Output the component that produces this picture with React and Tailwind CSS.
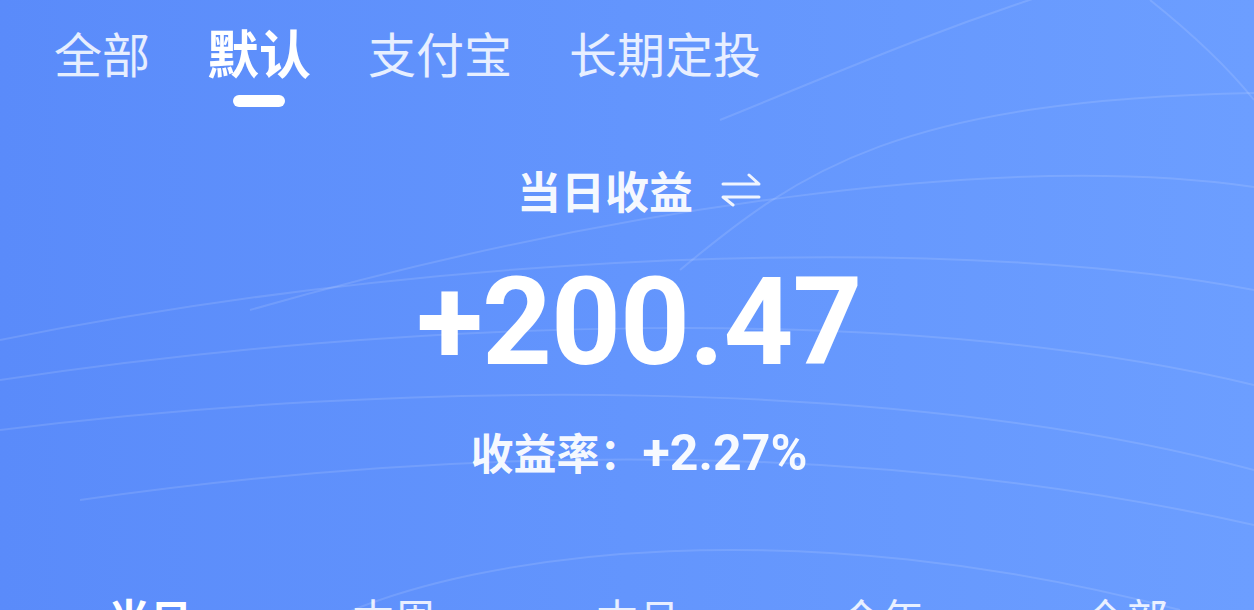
import { useState } from "react";

const TABS = ["全部", "默认", "支付宝", "长期定投"];
const PERIODS = ["当日", "本周", "本月", "今年", "全部"];

const CJK = "font-['Noto_Sans_CJK_SC',sans-serif]";
const NUM = "font-['Roboto','Noto_Sans_CJK_SC',sans-serif]";

function Waves() {
  return (
    <svg
      className="absolute inset-0 w-full h-full pointer-events-none"
      viewBox="0 0 1254 610"
      preserveAspectRatio="none"
      fill="none"
      stroke="white"
      strokeWidth="2"
      strokeOpacity="0.12"
    >
      <path d="M720 120 C820 80 920 35 1060 -10" />
      <path d="M680 270 C800 170 900 100 1254 93" />
      <path d="M250 310 C600 210 1000 150 1254 187" />
      <path d="M0 340 C500 240 1000 240 1254 290" />
      <path d="M0 380 C400 320 900 300 1254 385" />
      <path d="M0 430 C400 380 900 375 1254 470" />
      <path d="M80 500 C500 440 900 445 1254 525" />
      <path d="M330 620 C480 550 800 510 1180 610" />
      <path d="M1150 0 C1200 40 1230 70 1254 100" />
    </svg>
  );
}

export default function App() {
  const [tab, setTab] = useState(1);
  const [period, setPeriod] = useState(0);

  return (
    <div className="relative w-full h-[610px] overflow-hidden bg-gradient-to-r from-[#5a8bfa] via-[#6395fd] to-[#6c9eff] text-white">
      <Waves />

      <div className="relative flex flex-col">
        {/* Top tabs */}
        <div className={`flex items-start gap-[57px] pl-[54px] pt-[26px] ${CJK}`}>
          {TABS.map((t, i) => (
            <button
              key={t}
              onClick={() => setTab(i)}
              className="flex flex-col items-center"
            >
              <span
                className={
                  i === tab
                    ? "text-[52px] leading-none font-bold text-white"
                    : "text-[48px] leading-none mt-[2px] text-white/85"
                }
              >
                {t}
              </span>
              {i === tab && (
                <span className="mt-[17px] w-[52px] h-[12px] rounded-full bg-white" />
              )}
            </button>
          ))}
        </div>

        {/* Summary */}
        <div className="flex flex-col items-center pl-[24px] mt-[61px]">
          <div className={`flex items-center gap-[28px] ${CJK}`}>
            <span className="text-[44px] leading-none font-semibold text-white/95">当日收益</span>
            <svg width="40" height="34" viewBox="0 0 40 34" fill="none" stroke="white" strokeWidth="3" strokeLinecap="round" strokeLinejoin="round" className="opacity-90">
              <path d="M2 11 H38 L28 2" />
              <path d="M38 24 H2 L12 32" />
            </svg>
          </div>

          <div className={`mt-[50px] text-[122px] leading-none font-bold tracking-[-1px] ${NUM}`}>
            +200.47
          </div>

          <div className={`mt-[44px] flex items-baseline font-semibold text-white/95 ${CJK}`}>
            <span className="text-[43px] leading-none">收益率：</span>
            <span className={`text-[50px] leading-none font-bold ${NUM}`}>+2.27%</span>
          </div>
        </div>

        {/* Period tabs */}
        <div className={`mt-[118px] pl-[28px] grid grid-cols-5 w-[1248px] ${CJK}`}>
          {PERIODS.map((p, i) => (
            <button
              key={p}
              onClick={() => setPeriod(i)}
              className={`text-center text-[42px] leading-none ${
                i === period ? "font-bold text-white" : "text-white/85"
              }`}
            >
              {p}
            </button>
          ))}
        </div>
      </div>
    </div>
  );
}
